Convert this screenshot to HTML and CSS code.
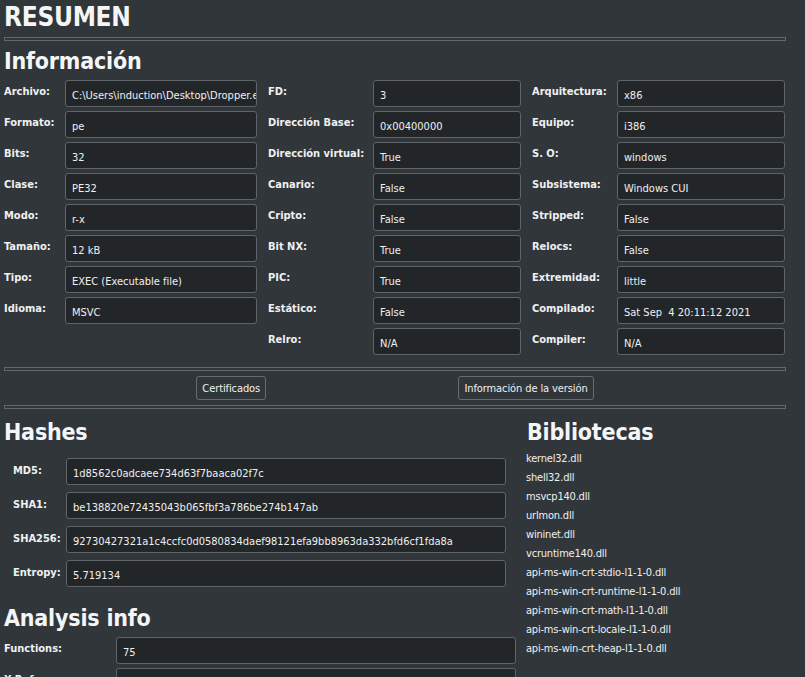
FILE: index.html
```html
<!DOCTYPE html>
<html lang="es">
<head>
<meta charset="utf-8">
<title>Resumen</title>
<link rel="stylesheet" href="styles.css">
</head>
<body>
<div class="page">
  <h1 class="title">RESUMEN</h1>
  <div class="sep"></div>
  <h2 class="heading">Información</h2>
  <div class="info">
    <div class="col col1">
      <div class="lbl">Archivo:</div><div class="val">C:\Users\induction\Desktop\Dropper.exe</div>
      <div class="lbl">Formato:</div><div class="val">pe</div>
      <div class="lbl">Bits:</div><div class="val">32</div>
      <div class="lbl">Clase:</div><div class="val">PE32</div>
      <div class="lbl">Modo:</div><div class="val">r-x</div>
      <div class="lbl">Tamaño:</div><div class="val">12 kB</div>
      <div class="lbl">Tipo:</div><div class="val">EXEC (Executable file)</div>
      <div class="lbl">Idioma:</div><div class="val">MSVC</div>
    </div>
    <div class="col col2">
      <div class="lbl">FD:</div><div class="val">3</div>
      <div class="lbl">Dirección Base:</div><div class="val">0x00400000</div>
      <div class="lbl">Dirección virtual:</div><div class="val">True</div>
      <div class="lbl">Canario:</div><div class="val">False</div>
      <div class="lbl">Cripto:</div><div class="val">False</div>
      <div class="lbl">Bit NX:</div><div class="val">True</div>
      <div class="lbl">PIC:</div><div class="val">True</div>
      <div class="lbl">Estático:</div><div class="val">False</div>
      <div class="lbl">Relro:</div><div class="val">N/A</div>
    </div>
    <div class="col col3">
      <div class="lbl">Arquitectura:</div><div class="val">x86</div>
      <div class="lbl">Equipo:</div><div class="val">i386</div>
      <div class="lbl">S. O:</div><div class="val">windows</div>
      <div class="lbl">Subsistema:</div><div class="val">Windows CUI</div>
      <div class="lbl">Stripped:</div><div class="val">False</div>
      <div class="lbl">Relocs:</div><div class="val">False</div>
      <div class="lbl">Extremidad:</div><div class="val">little</div>
      <div class="lbl">Compilado:</div><div class="val pre">Sat Sep  4 20:11:12 2021</div>
      <div class="lbl">Compiler:</div><div class="val">N/A</div>
    </div>
  </div>
  <div class="sep sep-mid"></div>
  <div class="buttons">
    <button class="btn">Certificados</button>
    <button class="btn">Información de la versión</button>
  </div>
  <div class="sep"></div>
  <div class="lower">
    <div class="left">
      <h2 class="heading h-hashes">Hashes</h2>
      <div class="hashes">
        <div class="lbl">MD5:</div><div class="val">1d8562c0adcaee734d63f7baaca02f7c</div>
        <div class="lbl">SHA1:</div><div class="val">be138820e72435043b065fbf3a786be274b147ab</div>
        <div class="lbl">SHA256:</div><div class="val">92730427321a1c4ccfc0d0580834daef98121efa9bb8963da332bfd6cf1fda8a</div>
        <div class="lbl">Entropy:</div><div class="val">5.719134</div>
      </div>
      <h2 class="heading h-analysis">Analysis info</h2>
      <div class="analysis">
        <div class="lbl">Functions:</div><div class="val">75</div>
        <div class="lbl">X-Refs:</div><div class="val">412</div>
      </div>
    </div>
    <div class="right">
      <h2 class="heading h-libs">Bibliotecas</h2>
      <ul class="libs">
        <li>kernel32.dll</li>
        <li>shell32.dll</li>
        <li>msvcp140.dll</li>
        <li>urlmon.dll</li>
        <li>wininet.dll</li>
        <li>vcruntime140.dll</li>
        <li>api-ms-win-crt-stdio-l1-1-0.dll</li>
        <li>api-ms-win-crt-runtime-l1-1-0.dll</li>
        <li>api-ms-win-crt-math-l1-1-0.dll</li>
        <li>api-ms-win-crt-locale-l1-1-0.dll</li>
        <li>api-ms-win-crt-heap-l1-1-0.dll</li>
      </ul>
    </div>
  </div>
</div>
</body>
</html>
```

FILE: styles.css
```css
html, body {
  margin: 0;
  padding: 0;
  background: #31363b;
  color: #eff0f1;
  font-family: "DejaVu Sans Condensed", "DejaVu Sans", sans-serif;
  font-size: 11px;
  overflow: hidden;
}

.page {
  width: 782px;
  padding: 0 0 0 4px;
}

.title {
  margin: 0;
  padding-top: 2px;
  height: 32px;
  font-size: 26px;
  line-height: 30px;
  font-weight: bold;
  letter-spacing: -0.3px;
  color: #f4f5f6;
}

.sep {
  height: 2px;
  border: 1px solid #62676c;
  margin: 3px 0 0 0;
}

.heading {
  margin: 0;
  font-size: 23px;
  line-height: 30px;
  font-weight: bold;
  color: #f4f5f6;
  letter-spacing: -0.2px;
}

.sep + .heading {
  margin-top: 5px;
}

.info {
  display: flex;
  gap: 11px;
  margin-top: 4px;
}

.col {
  display: grid;
  row-gap: 4px;
  grid-auto-rows: 27px;
  align-content: start;
}

.col1 { grid-template-columns: 61px 192px; }
.col2 { grid-template-columns: 105px 148px; }
.col3 { grid-template-columns: 85px 168px; }

.lbl {
  font-weight: bold;
  font-size: 11px;
  padding-top: 5px;
  white-space: nowrap;
  color: #eff0f1;
}

.val {
  box-sizing: border-box;
  height: 27px;
  background: #232629;
  border: 1px solid #5f6468;
  border-radius: 3px;
  padding: 8px 6px 0 6px;
  font-size: 11px;
  line-height: 14px;
  white-space: nowrap;
  overflow: hidden;
  color: #eff0f1;
}

.pre { white-space: pre; }

.sep-mid {
  margin-top: 12px;
}

.buttons {
  display: flex;
  justify-content: space-evenly;
  margin-top: 5px;
  height: 24px;
}

.btn {
  box-sizing: border-box;
  height: 24px;
  background: #31363b;
  color: #eff0f1;
  border: 1px solid #686d72;
  border-radius: 3px;
  font-family: "DejaVu Sans Condensed", "DejaVu Sans", sans-serif;
  font-size: 11px;
  letter-spacing: -0.1px;
  padding: 0 5px;
}

.buttons + .sep {
  margin-top: 5px;
}

.lower {
  display: flex;
  gap: 11px;
}

.left {
  width: 512px;
}

.right {
  flex: 1;
}

.h-hashes, .h-libs {
  margin-top: 8px;
}

.hashes {
  display: grid;
  grid-template-columns: 53px 440px;
  padding-left: 9px;
  row-gap: 7px;
  grid-auto-rows: 27px;
  margin-top: 11px;
}

.hashes .lbl { padding-top: 6px; }

.h-analysis {
  margin-top: 16px;
}

.analysis {
  display: grid;
  grid-template-columns: 112px 400px;
  row-gap: 4px;
  grid-auto-rows: 27px;
  margin-top: 4px;
}

.libs {
  list-style: none;
  margin: 2px 0 0 0;
  padding: 0;
}

.libs li {
  height: 19px;
  line-height: 19px;
  font-size: 11px;
  letter-spacing: -0.2px;
  margin-left: -1px;
}
```
